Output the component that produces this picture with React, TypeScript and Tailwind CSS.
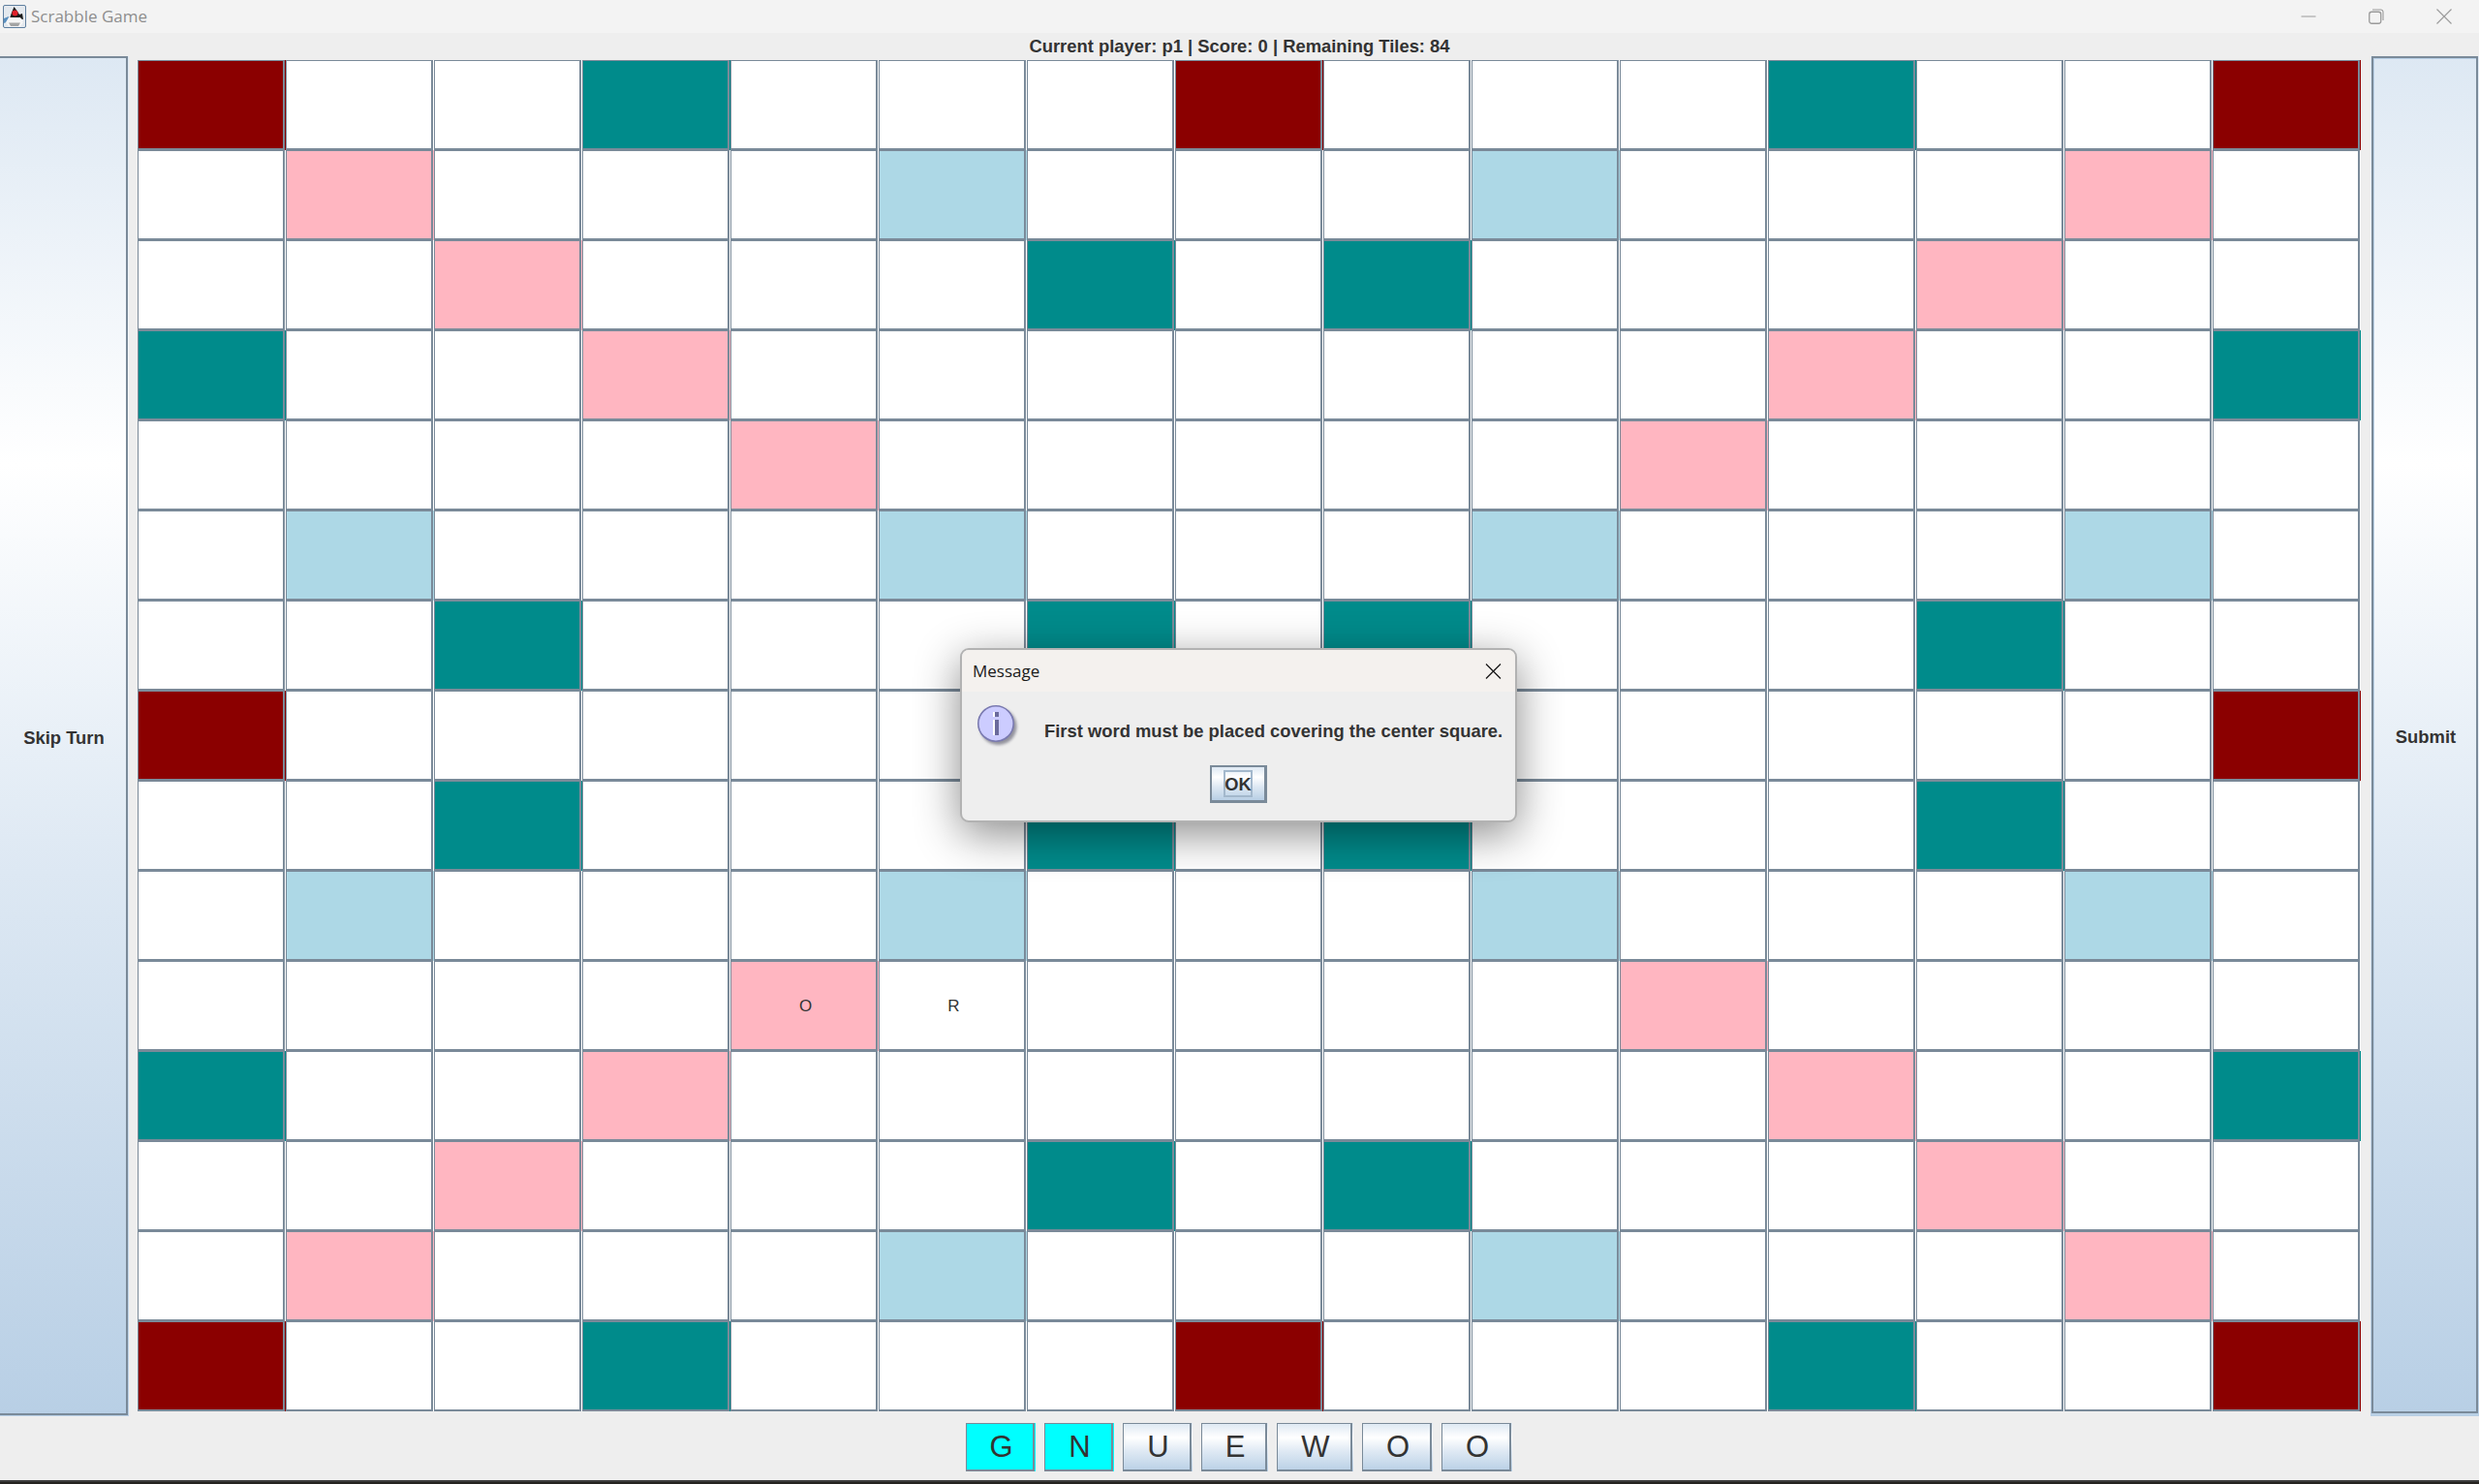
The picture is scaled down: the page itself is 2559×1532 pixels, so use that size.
const board = [
  "R..T...R...T..R",
  ".P...B...B...P.",
  "..P...T.T...P..",
  "T..P.......P..T",
  "....P.....P....",
  ".B...B...B...B.",
  "..T...T.T...T..",
  "R.............R",
  "..T...T.T...T..",
  ".B...B...B...B.",
  "....P.....P....",
  "T..P.......P..T",
  "..P...T.T...P..",
  ".P...B...B...P.",
  "R..T...R...T..R",
];

const fills: Record<string, string> = {
  R: "bg-[#8b0000]",
  T: "bg-[#008b8b]",
  P: "bg-[#ffb6c1]",
  B: "bg-[#add8e6]",
  ".": "bg-white",
};

// letters already placed on the board, keyed by row-col
const placed: Record<string, string> = { "10-4": "O", "10-5": "R" };

const rack = [
  { letter: "G", width: "w-[72px]", selected: true },
  { letter: "N", width: "w-[72px]", selected: true },
  { letter: "U", width: "w-[72px]", selected: false },
  { letter: "E", width: "w-[69px]", selected: false },
  { letter: "W", width: "w-[79px]", selected: false },
  { letter: "O", width: "w-[73px]", selected: false },
  { letter: "O", width: "w-[73px]", selected: false },
];

const metal = "bg-[linear-gradient(180deg,#dde8f3_0%,#ffffff_30%,#dde8f3_60%,#b8cfe5_100%)]";

function Cell({ kind, letter }: { kind: string; letter?: string }) {
  return (
    <div className={`${fills[kind]} pr-px`}>
      <div className="flex h-full items-center justify-center border-t border-r-2 border-b-2 border-l border-[#7a8a99] pt-[2px] pl-[4px] text-[17px] text-[#333333]">
        {letter}
      </div>
    </div>
  );
}

function JavaIcon() {
  return (
    <svg width="24" height="24" viewBox="0 0 24 24" className="shrink-0">
      <rect x="0.5" y="0.5" width="23" height="23" rx="1.5" fill="#e4e9ee" stroke="#5f7f9f" />
      <path d="M1 14 L6 12 L6 17 L1 19 Z" fill="#5a90c0" />
      <path d="M11.5 2 L14.5 6 L17 10 L20 9 L21 15 L17 14 L7 14 L9 8 Z" fill="#1c1c1c" />
      <path d="M6 13 L18 13 L21 18 L18 22.5 L6 22.5 L3 18 Z" fill="#f6f6f6" />
      <path d="M6 18.5 L18 18.5 L16 22 L8 22 Z" fill="#a4a4a4" />
      <circle cx="12.5" cy="8.5" r="3" fill="#e0202a" />
    </svg>
  );
}

function TitleBar() {
  return (
    <div className="flex h-[34px] shrink-0 items-center bg-[#f3f3f3] pl-[3px]">
      <JavaIcon />
      <span className="ml-[5px] font-['Open_Sans'] text-[17px] text-[#8e8e8e]">Scrabble Game</span>
      <div className="ml-auto flex items-center gap-[54px] pr-[28px] text-[#9a9a9a]">
        <svg width="16" height="16" viewBox="0 0 16 16">
          <path d="M0.5 8 H15.5" stroke="currentColor" fill="none" />
        </svg>
        <svg width="16" height="16" viewBox="0 0 16 16">
          <rect x="0.75" y="3.25" width="12" height="12" rx="2.5" stroke="currentColor" strokeWidth="1.3" fill="none" />
          <path d="M4 1 H12.5 A2.5 2.5 0 0 1 15 3.5 V12" stroke="currentColor" strokeWidth="1.1" fill="none" />
        </svg>
        <svg width="16" height="16" viewBox="0 0 16 16">
          <path d="M0.5 0.5 L15.5 15.5 M15.5 0.5 L0.5 15.5" stroke="currentColor" strokeWidth="1.1" fill="none" />
        </svg>
      </div>
    </div>
  );
}

function InfoIcon() {
  return (
    <svg width="46" height="46" viewBox="0 0 46 46" className="shrink-0">
      <defs>
        <filter id="drop" x="-20%" y="-20%" width="150%" height="150%">
          <feGaussianBlur stdDeviation="1.6" />
        </filter>
      </defs>
      <circle cx="21.5" cy="22" r="19" fill="#555566" opacity="0.6" filter="url(#drop)" />
      <circle cx="19" cy="19" r="18.2" fill="#ccccff" stroke="#7a7ab0" strokeWidth="1.6" />
      <rect x="16" y="7" width="6" height="5" fill="#6a6a9c" />
      <rect x="16" y="7" width="2" height="5" fill="#ffffff" />
      <rect x="16" y="15" width="6" height="16" fill="#6a6a9c" />
      <rect x="16" y="15" width="2" height="16" fill="#ffffff" />
    </svg>
  );
}

function MessageDialog() {
  return (
    <div className="absolute top-[669px] left-[991px] flex h-[180px] w-[575px] flex-col overflow-hidden rounded-[9px] border-2 border-[#b2b2b2] bg-[#eeeeee] shadow-[0_12px_46px_rgba(0,0,0,0.46)]">
      <div className="flex h-[43px] shrink-0 items-center justify-between bg-[#f4f1ee] pr-[14px] pl-[11px]">
        <span className="font-['Open_Sans'] text-[17px] text-[#1a1a1a]">Message</span>
        <svg width="17" height="16" viewBox="0 0 17 16">
          <path d="M1 0.5 L16 15.5 M16 0.5 L1 15.5" stroke="#1a1a1a" strokeWidth="1.3" fill="none" />
        </svg>
      </div>
      <div className="flex pt-[14px] pl-[16px]">
        <InfoIcon />
        <span className="mt-[15px] ml-[23px] text-[18.4px] leading-[24px] font-bold whitespace-nowrap text-[#333333]">
          First word must be placed covering the center square.
        </span>
      </div>
      <div className="mt-[16px] flex justify-center">
        <div className={`flex h-[39px] w-[59px] items-center justify-center border-t-2 border-r-[3px] border-b-[3px] border-l-2 border-[#7a8a99] ${metal}`}>
          <span className="flex h-[28px] w-[30px] items-center justify-center border-2 border-[#a3b8cc] pt-[1px] text-[18.3px] font-bold text-[#333333]">
            OK
          </span>
        </div>
      </div>
    </div>
  );
}

export default function App() {
  return (
    <div className="relative flex h-[1532px] w-[2559px] flex-col overflow-hidden bg-[#eeeeee] font-['Liberation_Sans',Arial,sans-serif]">
      <TitleBar />
      <div className="flex h-[24px] shrink-0 items-center justify-center pt-[4px] text-[18.4px] font-bold text-[#333333]">
        Current player: p1 | Score: 0 | Remaining Tiles: 84
      </div>

      <div className="flex h-[1404px] shrink-0">
        {/* Skip Turn */}
        <div className={`h-full w-[133px] shrink-0 pr-px pb-px ${metal}`}>
          <div className="flex h-full items-center justify-center border-t-2 border-r-2 border-b-2 border-[#7a8a99] pt-[4px] pl-[2px] text-[18.4px] font-bold text-[#333333]">
            Skip Turn
          </div>
        </div>

        {/* Board */}
        <div className="ml-[9px] grid h-[1395px] w-[2295px] shrink-0 translate-y-[4px] grid-cols-[repeat(15,153px)] grid-rows-[repeat(15,93px)]">
          {board.map((row, r) =>
            row.split("").map((kind, c) => <Cell key={`${r}-${c}`} kind={kind} letter={placed[`${r}-${c}`]} />)
          )}
        </div>

        {/* Submit */}
        <div className={`ml-[10px] h-full w-[112px] shrink-0 pr-px pb-[3px] pl-px ${metal}`}>
          <div className="flex h-full items-center justify-center border-2 border-[#7a8a99] pt-[4px] pl-[2px] text-[18.4px] font-bold text-[#333333] shadow-[inset_1px_1px_0_#b8cfe5]">
            Submit
          </div>
        </div>
      </div>

      {/* Tile rack */}
      <div className="flex h-[66px] shrink-0 justify-center gap-[9px] pt-[7px] pr-[2px]">
        {rack.map((tile, i) => (
          <div key={i} className={`h-[50px] ${tile.width} pr-px ${tile.selected ? "bg-[#00ffff]" : metal}`}>
            <div className="flex h-full items-center justify-center border-t border-r-2 border-b-2 border-l border-[#7a8a99] pt-[2px] pl-[4px] text-[31px] text-[#333333]">
              {tile.letter}
            </div>
          </div>
        ))}
      </div>

      <div className="h-[4px] shrink-0 border-t-2 border-[#3c3c3c] bg-[#24221f]" />

      <MessageDialog />
    </div>
  );
}
